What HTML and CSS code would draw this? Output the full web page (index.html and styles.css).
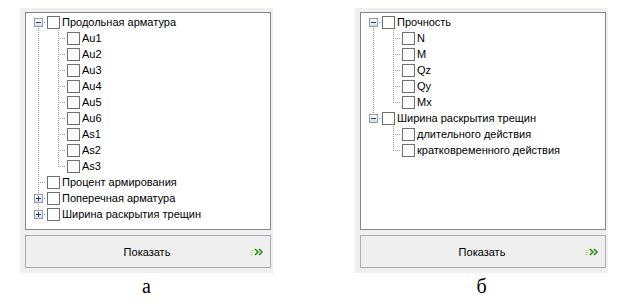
FILE: index.html
```html
<!DOCTYPE html>
<html lang="ru">
<head>
    <meta charset="UTF-8">
    <title>Результаты</title>
    <link rel="stylesheet" href="styles.css">
</head>
<body>

    <div class="figure">
        <div class="column">
            <div class="panel">
                <div class="tree">
                    <div class="node"><span class="g first"><span class="exp minus"></span></span><span class="chk"></span><span class="label">Продольная арматура</span></div>
                    <div class="node"><span class="g pipe"></span><span class="g tee"></span><span class="chk"></span><span class="label">Au1</span></div>
                    <div class="node"><span class="g pipe"></span><span class="g tee"></span><span class="chk"></span><span class="label">Au2</span></div>
                    <div class="node"><span class="g pipe"></span><span class="g tee"></span><span class="chk"></span><span class="label">Au3</span></div>
                    <div class="node"><span class="g pipe"></span><span class="g tee"></span><span class="chk"></span><span class="label">Au4</span></div>
                    <div class="node"><span class="g pipe"></span><span class="g tee"></span><span class="chk"></span><span class="label">Au5</span></div>
                    <div class="node"><span class="g pipe"></span><span class="g tee"></span><span class="chk"></span><span class="label">Au6</span></div>
                    <div class="node"><span class="g pipe"></span><span class="g tee"></span><span class="chk"></span><span class="label">As1</span></div>
                    <div class="node"><span class="g pipe"></span><span class="g tee"></span><span class="chk"></span><span class="label">As2</span></div>
                    <div class="node"><span class="g pipe"></span><span class="g elbow"></span><span class="chk"></span><span class="label">As3</span></div>
                    <div class="node"><span class="g tee"></span><span class="chk"></span><span class="label">Процент армирования</span></div>
                    <div class="node"><span class="g tee"><span class="exp plus"></span></span><span class="chk"></span><span class="label">Поперечная арматура</span></div>
                    <div class="node"><span class="g elbow"><span class="exp plus"></span></span><span class="chk"></span><span class="label">Ширина раскрытия трещин</span></div>
                </div>
                <button class="show-btn">
                    <span class="show-text">Показать</span>
                    <svg class="arrows" width="14" height="8" viewBox="0 0 14 8">
                        <path d="M0 2.5h4M0 4.5h4M0 6.5h3" stroke="#d6df9a" stroke-width="1"/>
                        <path d="M5 1l3 3-3 3M9 1l3 3-3 3" fill="none" stroke="#2f8a1f" stroke-width="1.6"/>
                    </svg>
                </button>
            </div>
            <div class="caption">а</div>
        </div>

        <div class="column">
            <div class="panel">
                <div class="tree">
                    <div class="node"><span class="g first"><span class="exp minus"></span></span><span class="chk"></span><span class="label">Прочность</span></div>
                    <div class="node"><span class="g pipe"></span><span class="g tee"></span><span class="chk"></span><span class="label">N</span></div>
                    <div class="node"><span class="g pipe"></span><span class="g tee"></span><span class="chk"></span><span class="label">M</span></div>
                    <div class="node"><span class="g pipe"></span><span class="g tee"></span><span class="chk"></span><span class="label">Qz</span></div>
                    <div class="node"><span class="g pipe"></span><span class="g tee"></span><span class="chk"></span><span class="label">Qy</span></div>
                    <div class="node"><span class="g pipe"></span><span class="g elbow"></span><span class="chk"></span><span class="label">Mx</span></div>
                    <div class="node"><span class="g elbow"><span class="exp minus"></span></span><span class="chk"></span><span class="label">Ширина раскрытия трещин</span></div>
                    <div class="node"><span class="g"></span><span class="g tee"></span><span class="chk"></span><span class="label">длительного действия</span></div>
                    <div class="node"><span class="g"></span><span class="g elbow"></span><span class="chk"></span><span class="label">кратковременного действия</span></div>
                </div>
                <button class="show-btn">
                    <span class="show-text">Показать</span>
                    <svg class="arrows" width="14" height="8" viewBox="0 0 14 8">
                        <path d="M0 2.5h4M0 4.5h4M0 6.5h3" stroke="#d6df9a" stroke-width="1"/>
                        <path d="M5 1l3 3-3 3M9 1l3 3-3 3" fill="none" stroke="#2f8a1f" stroke-width="1.6"/>
                    </svg>
                </button>
            </div>
            <div class="caption">б</div>
        </div>
    </div>

</body>
</html>
```

FILE: styles.css
```css
body {
    margin: 0;
    background-color: #fff;
    font-family: "Liberation Sans", Arial, sans-serif;
}

.figure {
    display: flex;
    gap: 82px;
    padding: 8px 0 0 20px;
}

.column {
    display: flex;
    flex-direction: column;
    align-items: center;
}

.panel {
    width: 253px;
    box-sizing: border-box;
    padding: 4px 2px 5px 5px;
    background-color: #f0f0f0;
}

.tree {
    height: 218px;
    box-sizing: border-box;
    border: 1px solid #828790;
    background-color: #fff;
    padding-top: 1px;
}

.node {
    display: flex;
    align-items: center;
    height: 16px;
}

/* tree lines */
.g {
    display: flex;
    align-items: center;
    flex: none;
    width: 20px;
    height: 16px;
    background-repeat: no-repeat;
}

.pipe {
    background-image: repeating-linear-gradient(to bottom, #a0a0a0 0 1px, transparent 1px 2px);
    background-size: 1px 16px;
    background-position: 12px 0;
}

.tee, .elbow, .first {
    background-image:
        repeating-linear-gradient(to bottom, #a0a0a0 0 1px, transparent 1px 2px),
        repeating-linear-gradient(to right, #a0a0a0 0 1px, transparent 1px 2px);
}

.tee {
    background-size: 1px 16px, 8px 1px;
    background-position: 12px 0, 12px 8px;
}

.elbow {
    background-size: 1px 9px, 8px 1px;
    background-position: 12px 0, 12px 8px;
}

.first {
    background-size: 1px 8px, 8px 1px;
    background-position: 12px 8px, 12px 8px;
}

.exp {
    width: 9px;
    height: 9px;
    margin-left: 8px;
    box-sizing: border-box;
    border: 1px solid #8f9bab;
}

.minus {
    background:
        linear-gradient(#1f3f7a, #1f3f7a) 1px 3px / 5px 1px no-repeat,
        linear-gradient(#fff, #dcdcdc);
}

.plus {
    background:
        linear-gradient(#1f3f7a, #1f3f7a) 1px 3px / 5px 1px no-repeat,
        linear-gradient(#1f3f7a, #1f3f7a) 3px 1px / 1px 5px no-repeat,
        linear-gradient(#fff, #dcdcdc);
}

.chk {
    flex: none;
    width: 13px;
    height: 13px;
    margin-left: 1px;
    box-sizing: border-box;
    border: 1px solid #707070;
    background-color: #fff;
}

.label {
    margin-left: 2px;
    font-size: 11px;
    line-height: 16px;
    white-space: nowrap;
    color: #000;
}

.show-btn {
    display: flex;
    align-items: center;
    width: 100%;
    height: 33px;
    margin-top: 5px;
    padding: 0 6px 0 0;
    box-sizing: border-box;
    border: 1px solid #adadad;
    background-color: #efefef;
    font-family: "Liberation Sans", Arial, sans-serif;
    font-size: 11px;
    color: #000;
}

.show-text {
    flex: 1;
    text-align: center;
    padding-left: 18px;
}

.arrows {
    flex: none;
}

.caption {
    margin-top: 3px;
    font-family: "Liberation Serif", "Times New Roman", serif;
    font-size: 20px;
    line-height: 20px;
}
```
